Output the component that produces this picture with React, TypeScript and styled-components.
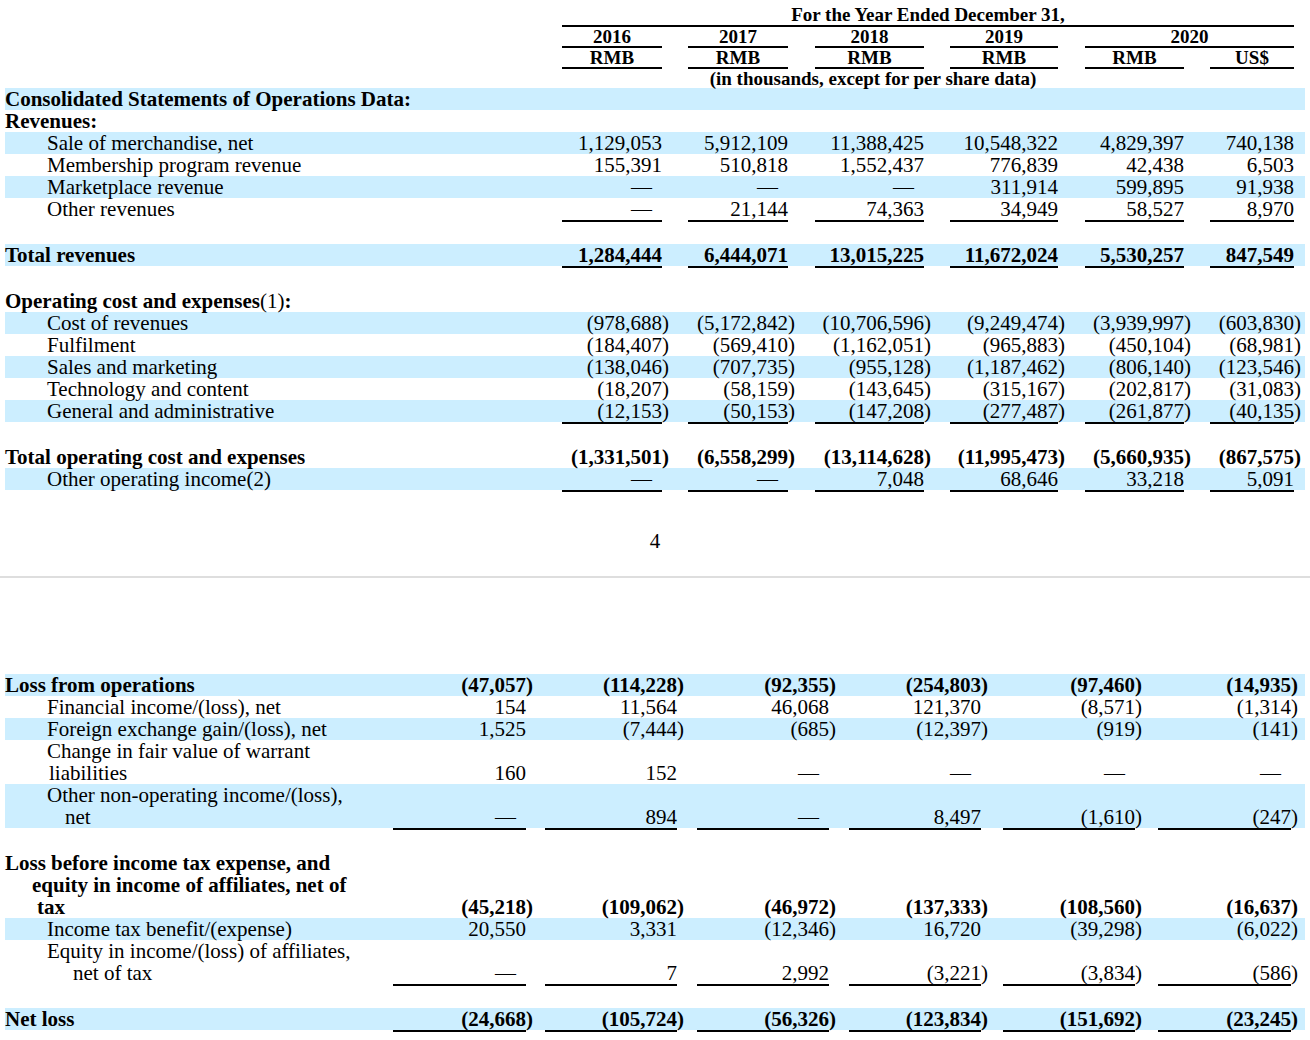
import React from 'react'
import styled, { createGlobalStyle } from 'styled-components'

const GlobalStyle = createGlobalStyle`
  html, body {
    margin: 0;
    padding: 0;
    background: #fff;
  }
  body {
    font-family: 'Liberation Serif', 'Times New Roman', serif;
    font-size: 21px;
    color: #000;
  }
`

// grid columns: label, then 6 x (value, paren/gap)
const COLS_TOP = '557px 100px 26px 100px 27px 109px 26px 108px 27px 99px 26px 84px 11px'
const COLS_BOTTOM = '388px 133px 19px 132px 20px 132px 20px 132px 22px 132px 23px 133px 14px'

const Page = styled.div`
  width: 1310px;
  padding-top: 5px;
`

const Section = styled.div`
  padding: 0 5px;
`

const Row = styled.div<{ $cols: string; $band?: boolean }>`
  display: grid;
  grid-template-columns: ${({ $cols }) => $cols};
  align-items: end;
  min-height: 22px;
  background: ${({ $band }) => ($band ? '#cceeff' : 'transparent')};
`

const HeadRow = styled.div<{ $cols: string; $h: number }>`
  display: grid;
  grid-template-columns: ${({ $cols }) => $cols};
  height: ${({ $h }) => $h}px;
`

const HeadCell = styled.div<{ $col: string; $ruled?: boolean; $h: number }>`
  grid-column: ${({ $col }) => $col};
  box-sizing: border-box;
  text-align: center;
  font-size: 19px;
  font-weight: 700;
  white-space: nowrap;
  line-height: ${({ $h }) => $h - 2}px;
  border-bottom: 2px solid ${({ $ruled }) => ($ruled ? '#000' : 'transparent')};
`

const RuleRow = styled.div<{ $cols: string }>`
  display: grid;
  grid-template-columns: ${({ $cols }) => $cols};
  height: 2px;
`

const Line = styled.div<{ $col: number }>`
  grid-column: ${({ $col }) => $col};
  background: #000;
`

const Label = styled.div<{ $bold?: boolean }>`
  font-weight: ${({ $bold }) => ($bold ? 700 : 400)};
  line-height: 22px;
  white-space: nowrap;
`

const LabelLine = styled.div<{ $pad: number }>`
  padding-left: ${({ $pad }) => $pad}px;
`

const Plain = styled.span`
  font-weight: 400;
`

const Value = styled.div<{ $bold?: boolean; $dash?: boolean }>`
  text-align: right;
  white-space: nowrap;
  line-height: 22px;
  font-weight: ${({ $bold }) => ($bold ? 700 : 400)};
  padding-right: ${({ $dash }) => ($dash ? '10px' : '0')};
`

const Paren = styled.div<{ $bold?: boolean }>`
  line-height: 22px;
  font-weight: ${({ $bold }) => ($bold ? 700 : 400)};
`

const Blank = styled.div`
  height: 22px;
`

const PageNumber = styled.div`
  margin-top: 38px;
  text-align: center;
  line-height: 22px;
`

const PageBreak = styled.div`
  margin-top: 24px;
  height: 2px;
  background: #dedede;
`

const Spacer = styled.div`
  height: 96px;
`

type LineSpec = [string | React.ReactNode, number]

type RowSpec = {
  lines?: LineSpec[]
  bold?: boolean
  band?: boolean
  values?: string[]
  rule?: boolean
  blank?: boolean
}

const topRows: RowSpec[] = [
  { lines: [['Consolidated Statements of Operations Data:', 0]], bold: true, band: true },
  { lines: [['Revenues:', 0]], bold: true },
  {
    lines: [['Sale of merchandise, net', 42]],
    band: true,
    values: ['1,129,053', '5,912,109', '11,388,425', '10,548,322', '4,829,397', '740,138'],
  },
  {
    lines: [['Membership program revenue', 42]],
    values: ['155,391', '510,818', '1,552,437', '776,839', '42,438', '6,503'],
  },
  {
    lines: [['Marketplace revenue', 42]],
    band: true,
    values: ['—', '—', '—', '311,914', '599,895', '91,938'],
  },
  {
    lines: [['Other revenues', 42]],
    values: ['—', '21,144', '74,363', '34,949', '58,527', '8,970'],
    rule: true,
  },
  { blank: true },
  {
    lines: [['Total revenues', 0]],
    bold: true,
    band: true,
    values: ['1,284,444', '6,444,071', '13,015,225', '11,672,024', '5,530,257', '847,549'],
    rule: true,
  },
  { blank: true },
  {
    lines: [[<>Operating cost and expenses<Plain>(1)</Plain>:</>, 0]],
    bold: true,
  },
  {
    lines: [['Cost of revenues', 42]],
    band: true,
    values: ['(978,688)', '(5,172,842)', '(10,706,596)', '(9,249,474)', '(3,939,997)', '(603,830)'],
  },
  {
    lines: [['Fulfilment', 42]],
    values: ['(184,407)', '(569,410)', '(1,162,051)', '(965,883)', '(450,104)', '(68,981)'],
  },
  {
    lines: [['Sales and marketing', 42]],
    band: true,
    values: ['(138,046)', '(707,735)', '(955,128)', '(1,187,462)', '(806,140)', '(123,546)'],
  },
  {
    lines: [['Technology and content', 42]],
    values: ['(18,207)', '(58,159)', '(143,645)', '(315,167)', '(202,817)', '(31,083)'],
  },
  {
    lines: [['General and administrative', 42]],
    band: true,
    values: ['(12,153)', '(50,153)', '(147,208)', '(277,487)', '(261,877)', '(40,135)'],
    rule: true,
  },
  { blank: true },
  {
    lines: [['Total operating cost and expenses', 0]],
    bold: true,
    values: ['(1,331,501)', '(6,558,299)', '(13,114,628)', '(11,995,473)', '(5,660,935)', '(867,575)'],
  },
  {
    lines: [['Other operating income(2)', 42]],
    band: true,
    values: ['—', '—', '7,048', '68,646', '33,218', '5,091'],
    rule: true,
  },
]

const bottomRows: RowSpec[] = [
  {
    lines: [['Loss from operations', 0]],
    bold: true,
    band: true,
    values: ['(47,057)', '(114,228)', '(92,355)', '(254,803)', '(97,460)', '(14,935)'],
  },
  {
    lines: [['Financial income/(loss), net', 42]],
    values: ['154', '11,564', '46,068', '121,370', '(8,571)', '(1,314)'],
  },
  {
    lines: [['Foreign exchange gain/(loss), net', 42]],
    band: true,
    values: ['1,525', '(7,444)', '(685)', '(12,397)', '(919)', '(141)'],
  },
  {
    lines: [
      ['Change in fair value of warrant', 42],
      ['liabilities', 44],
    ],
    values: ['160', '152', '—', '—', '—', '—'],
  },
  {
    lines: [
      ['Other non-operating income/(loss),', 42],
      ['net', 60],
    ],
    band: true,
    values: ['—', '894', '—', '8,497', '(1,610)', '(247)'],
    rule: true,
  },
  { blank: true },
  {
    lines: [
      ['Loss before income tax expense, and', 0],
      ['equity in income of affiliates, net of', 27],
      ['tax', 32],
    ],
    bold: true,
    values: ['(45,218)', '(109,062)', '(46,972)', '(137,333)', '(108,560)', '(16,637)'],
  },
  {
    lines: [['Income tax benefit/(expense)', 42]],
    band: true,
    values: ['20,550', '3,331', '(12,346)', '16,720', '(39,298)', '(6,022)'],
  },
  {
    lines: [
      ['Equity in income/(loss) of affiliates,', 42],
      ['net of tax', 68],
    ],
    values: ['—', '7', '2,992', '(3,221)', '(3,834)', '(586)'],
    rule: true,
  },
  { blank: true },
  {
    lines: [['Net loss', 0]],
    bold: true,
    band: true,
    values: ['(24,668)', '(105,724)', '(56,326)', '(123,834)', '(151,692)', '(23,245)'],
    rule: true,
  },
]

const VALUE_COLS = [2, 4, 6, 8, 10, 12]

const DataRow = ({ row, cols }: { row: RowSpec; cols: string }) => {
  if (row.blank) return <Blank />
  return (
    <>
      <Row $cols={cols} $band={row.band}>
        <Label $bold={row.bold}>
          {row.lines?.map(([text, pad], i) => (
            <LabelLine key={i} $pad={pad}>
              {text}
            </LabelLine>
          ))}
        </Label>
        {row.values?.map((v, i) => {
          const neg = v.startsWith('(')
          return (
            <React.Fragment key={i}>
              <Value $bold={row.bold} $dash={v === '—'}>
                {neg ? v.slice(0, -1) : v}
              </Value>
              <Paren $bold={row.bold}>{neg ? ')' : ''}</Paren>
            </React.Fragment>
          )
        })}
      </Row>
      {row.rule && (
        <RuleRow $cols={cols}>
          {VALUE_COLS.map((c) => (
            <Line key={c} $col={c} />
          ))}
        </RuleRow>
      )}
    </>
  )
}

const TopHeader = () => (
  <>
    <HeadRow $cols={COLS_TOP} $h={22}>
      <HeadCell $col="2 / 13" $ruled $h={22}>
        For the Year Ended December 31,
      </HeadCell>
    </HeadRow>
    <HeadRow $cols={COLS_TOP} $h={21}>
      {['2016', '2017', '2018', '2019'].map((y, i) => (
        <HeadCell key={y} $col={`${2 + i * 2}`} $ruled $h={21}>
          {y}
        </HeadCell>
      ))}
      <HeadCell $col="10 / 13" $ruled $h={21}>
        2020
      </HeadCell>
    </HeadRow>
    <HeadRow $cols={COLS_TOP} $h={21}>
      {VALUE_COLS.map((c) => (
        <HeadCell key={c} $col={`${c}`} $ruled $h={21}>
          {c === 12 ? 'US$' : 'RMB'}
        </HeadCell>
      ))}
    </HeadRow>
    <HeadRow $cols={COLS_TOP} $h={19}>
      <HeadCell $col="4 / 9" $h={21}>
        (in thousands, except for per share data)
      </HeadCell>
    </HeadRow>
  </>
)

const App = () => {
  return (
    <Page>
      <GlobalStyle />
      <Section>
        <TopHeader />
        {topRows.map((r, i) => (
          <DataRow key={i} row={r} cols={COLS_TOP} />
        ))}
      </Section>
      <PageNumber>4</PageNumber>
      <PageBreak />
      <Spacer />
      <Section>
        {bottomRows.map((r, i) => (
          <DataRow key={i} row={r} cols={COLS_BOTTOM} />
        ))}
      </Section>
    </Page>
  )
}

export default App
